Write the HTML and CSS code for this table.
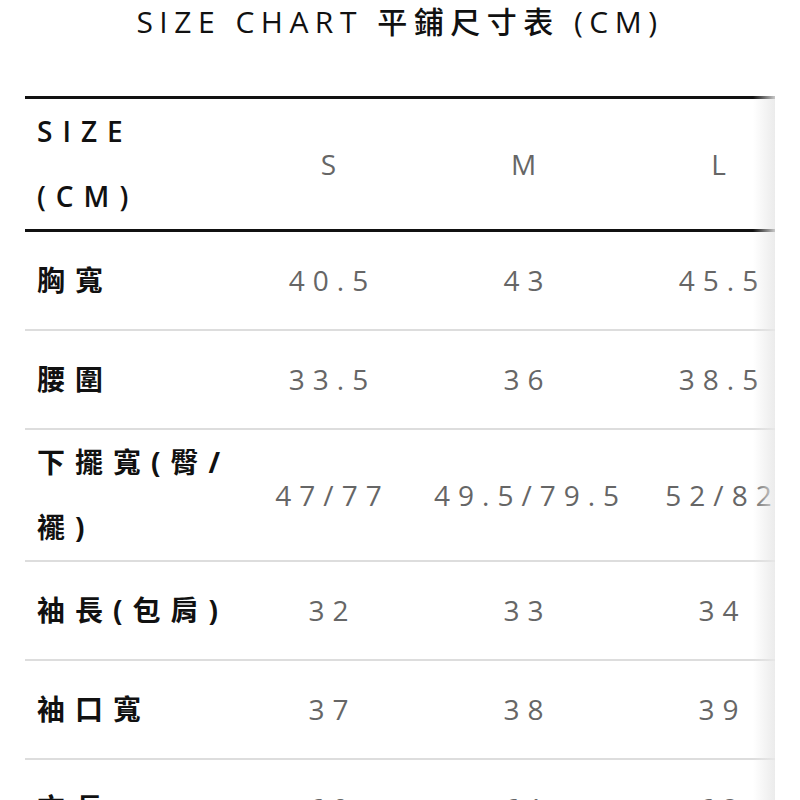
FILE: index.html
```html
<!DOCTYPE html>
<html lang="zh-Hant">
<head>
<meta charset="utf-8">
<title>Size Chart</title>
<link rel="stylesheet" href="styles.css">
</head>
<body>
<h1 class="title">SIZE CHART 平鋪尺寸表 (CM)</h1>
<div class="wrap">
  <table class="chart">
    <colgroup>
      <col class="c-label">
      <col class="c-size">
      <col class="c-size">
      <col class="c-size">
    </colgroup>
    <thead>
      <tr>
        <th class="label">SIZE<br>(CM)</th>
        <th class="sz">S</th>
        <th class="sz">M</th>
        <th class="sz">L</th>
      </tr>
    </thead>
    <tbody>
      <tr><td class="label">胸寬</td><td>40.5</td><td>43</td><td>45.5</td></tr>
      <tr><td class="label">腰圍</td><td>33.5</td><td>36</td><td>38.5</td></tr>
      <tr><td class="label">下擺寬(臀/<br>襬)</td><td>47/77</td><td>49.5/79.5</td><td>52/82</td></tr>
      <tr><td class="label">袖長(包肩)</td><td>32</td><td>33</td><td>34</td></tr>
      <tr><td class="label">袖口寬</td><td>37</td><td>38</td><td>39</td></tr>
      <tr><td class="label">衣長</td><td>60</td><td>61</td><td>62</td></tr>
    </tbody>
  </table>
</div>
</body>
</html>
```

FILE: styles.css
```css
html, body {
  margin: 0;
  padding: 0;
  background: #fff;
}
body {
  font-family: "Open Sans", "Noto Sans CJK TC", sans-serif;
  color: #111;
}
.title {
  margin: 0;
  height: 96px;
  line-height: 44px;
  text-align: center;
  font-size: 30px;
  font-weight: 500;
  letter-spacing: 6.5px;
  color: #111;
}
.wrap {
  position: relative;
  margin: 0 25px;
  overflow: hidden;
}
.wrap::after {
  content: "";
  position: absolute;
  top: 0;
  right: 0;
  bottom: 0;
  width: 22px;
  background: linear-gradient(to right, rgba(232,232,232,0), rgba(232,232,232,0.85));
}
.chart {
  width: 791px;
  table-layout: fixed;
  border-collapse: collapse;
  border-spacing: 0;
}
.c-label { width: 206px; }
.c-size { width: 195px; }
.chart thead tr {
  border-top: 3px solid #111;
  border-bottom: 3px solid #111;
}
.chart tbody tr {
  border-bottom: 2px solid #ddd;
}
.chart th, .chart td {
  padding: 0 0 0 8px;
  height: 97px;
  line-height: 65px;
  text-align: center;
  vertical-align: middle;
  font-size: 28px;
  font-weight: 400;
  color: #666;
  letter-spacing: 8px;
  white-space: nowrap;
}
.chart thead th {
  height: 126px;
}
.chart .label {
  text-align: left;
  padding-left: 12px;
  color: #111;
  font-weight: 700;
  letter-spacing: 10px;
}
.chart thead .label {
  font-weight: 600;
}
.chart .sz {
  padding-left: 0;
  letter-spacing: 0;
  color: #666;
}
```
